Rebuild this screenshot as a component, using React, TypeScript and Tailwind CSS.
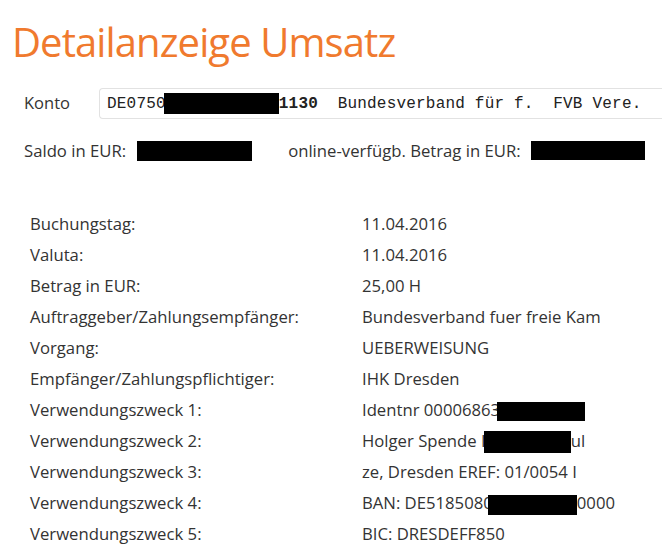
import React from 'react';

const rows: { label: string; value: React.ReactNode }[] = [
  { label: 'Buchungstag:', value: '11.04.2016' },
  { label: 'Valuta:', value: '11.04.2016' },
  { label: 'Betrag in EUR:', value: '25,00 H' },
  { label: 'Auftraggeber/Zahlungsempfänger:', value: 'Bundesverband fuer freie Kam' },
  { label: 'Vorgang:', value: 'UEBERWEISUNG' },
  { label: 'Empfänger/Zahlungspflichtiger:', value: 'IHK Dresden' },
  {
    label: 'Verwendungszweck 1:',
    value: (
      <>
        Identnr 00006863
        <span className="inline-block align-middle ml-[-3px] w-[88px] h-[19px] bg-black" />
      </>
    ),
  },
  {
    label: 'Verwendungszweck 2:',
    value: (
      <>
        Holger Spende I<span className="inline-block align-middle ml-[-2px] w-[87px] h-[22px] bg-black" />ul
      </>
    ),
  },
  { label: 'Verwendungszweck 3:', value: 'ze, Dresden EREF: 01/0054 I' },
  {
    label: 'Verwendungszweck 4:',
    value: (
      <>
        BAN: DE5185080
        <span className="inline-block align-middle ml-[-5px] w-[89px] h-[20px] bg-black" />
        0000
      </>
    ),
  },
  { label: 'Verwendungszweck 5:', value: 'BIC: DRESDEFF850' },
];

export default function App() {
  return (
    <div className="w-[662px] h-[555px] overflow-hidden bg-white text-[#333] font-['Open_Sans',sans-serif]">
      <h1 className="pl-[12px] pt-[18px] text-[40px] leading-[48px] text-[#f07a2e] tracking-[-0.9px]">
        Detailanzeige Umsatz
      </h1>

      <div className="flex items-center mt-[22px] pl-[24px]">
        <span className="w-[75px] text-[16.5px]">Konto</span>
        <div className="flex-1 h-[31px] flex items-center pl-[7px] border border-[#e2e2e2] rounded-l-[4px] border-r-0 font-['Liberation_Mono',monospace] text-[16px] text-[#222] whitespace-pre tracking-[0.2px]">
          DE0750<span className="inline-block ml-[-2px] w-[115px] h-[21px] bg-black" />
          <b>1130</b>  Bundesverband für f.  FVB Vere.
        </div>
      </div>

      <div className="flex items-center mt-[19px] pl-[24px] text-[16.7px]">
        <span>Saldo in EUR:</span>
        <span className="ml-[11px] w-[115px] h-[20px] bg-black" />
        <span className="ml-[36px]">online-verfügb. Betrag in EUR:</span>
        <span className="ml-[10px] w-[114px] h-[19px] bg-black" />
      </div>

      <div className="mt-[45px] pl-[30px] text-[16.7px]">
        {rows.map((r) => (
          <div key={r.label} className="flex items-center h-[31px]">
            <span className="w-[332px]">{r.label}</span>
            <span className="whitespace-nowrap">{r.value}</span>
          </div>
        ))}
      </div>
    </div>
  );
}
